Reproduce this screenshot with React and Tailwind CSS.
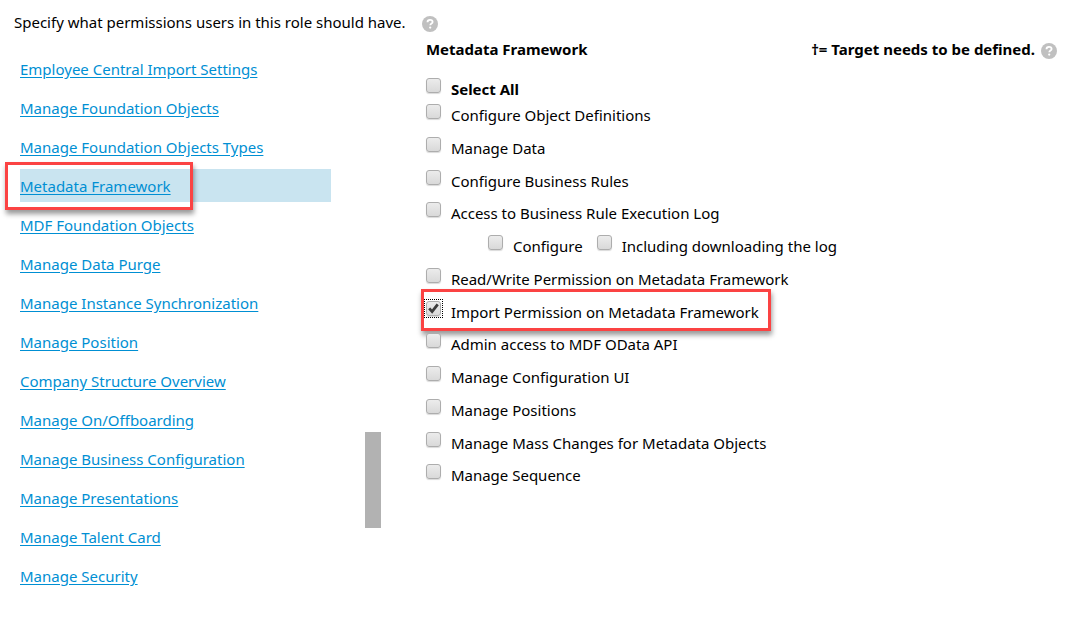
import React, { useState } from 'react';

const categories = [
  'Employee Central Import Settings',
  'Manage Foundation Objects',
  'Manage Foundation Objects Types',
  'Metadata Framework',
  'MDF Foundation Objects',
  'Manage Data Purge',
  'Manage Instance Synchronization',
  'Manage Position',
  'Company Structure Overview',
  'Manage On/Offboarding',
  'Manage Business Configuration',
  'Manage Presentations',
  'Manage Talent Card',
  'Manage Security',
];

const permissionRows = [
  ['Configure Object Definitions'],
  ['Manage Data'],
  ['Configure Business Rules'],
  ['Access to Business Rule Execution Log'],
  ['Configure', 'Including downloading the log'],
  ['Read/Write Permission on Metadata Framework'],
  ['Import Permission on Metadata Framework'],
  ['Admin access to MDF OData API'],
  ['Manage Configuration UI'],
  ['Manage Positions'],
  ['Manage Mass Changes for Metadata Objects'],
  ['Manage Sequence'],
];

const importPermission = 'Import Permission on Metadata Framework';

const HelpButton = () => (
  <button type="button" aria-label="Help" className="shrink-0">
    <svg width="16" height="16" viewBox="0 0 16 16" fill="none">
      <circle cx="8" cy="8" r="8" fill="#c0c0c0" />
      <path d="M5.5 6.3C5.5 4.7 6.5 3.9 8 3.9s2.6.8 2.6 2.1c0 1.6-2.3 1.6-2.3 3.3" stroke="#fff" strokeWidth="1.8" />
      <circle cx="8.2" cy="11.6" r="1.1" fill="#fff" />
    </svg>
  </button>
);

// red call-out frame, drawn over the item it surrounds
const Highlight = ({ className }) => (
  <span
    className={`pointer-events-none absolute border-3 border-[#fb4343] shadow-[1px_4px_5px_rgba(0,0,0,0.4)] ${className}`}
  />
);

const Permission = ({ label, checked, onChange, bold }) => (
  <label className="flex items-start gap-[10px]">
    <span
      className={`relative size-[15px] shrink-0 ${
        checked ? 'outline-1 outline-offset-1 outline-dotted outline-black' : ''
      }`}
    >
      <input
        type="checkbox"
        className="block size-[15px] appearance-none rounded-[3px] border border-[#adadad] bg-linear-to-b from-[#ececec] to-[#d9d9d9] shadow-[0_1px_1px_rgba(0,0,0,0.15)]"
        checked={checked}
        onChange={onChange}
      />
      {checked && (
        <svg className="pointer-events-none absolute inset-0" width="15" height="15" viewBox="0 0 15 15" fill="none">
          <path d="M3.2 7.4l2.9 3.2 5.6-7.2" stroke="#3c3c3c" strokeWidth="2.8" />
        </svg>
      )}
    </span>
    <span className={`pt-px leading-5 ${bold ? 'font-bold' : ''}`}>{label}</span>
  </label>
);

const App = () => {
  const [selected, setSelected] = useState([importPermission]);

  const toggle = (label) => {
    setSelected(selected.includes(label) ? selected.filter((s) => s !== label) : [...selected, label]);
  };

  const all = permissionRows.flat();
  const allSelected = all.every((label) => selected.includes(label));

  return (
    <main className="min-h-screen bg-white pt-3 pb-6 font-['Trebuchet_MS','Noto_Sans',sans-serif] text-[15px] leading-5 text-black">
      <div className="flex items-end gap-4 pl-[14px]">
        <p>Specify what permissions users in this role should have.</p>
        <HelpButton />
      </div>

      <div className="flex items-start">
        <div className="flex w-[35.5%] shrink-0 pt-5">
          <ul className="min-w-0 flex-1 space-y-[6px] pr-[34px] pl-5">
            {categories.map((name) => (
              <li
                key={name}
                className={`flex h-[33px] items-center ${name === 'Metadata Framework' ? 'bg-[#c9e4f0]' : ''}`}
              >
                <span className="relative">
                  <a href="#" className="text-[#008fd3] underline underline-offset-2">
                    {name}
                  </a>
                  {name === 'Metadata Framework' && (
                    <Highlight className="-top-[14px] -right-[22px] -bottom-[14px] -left-[15px]" />
                  )}
                </span>
              </li>
            ))}
          </ul>
          <div className="flex w-4 flex-col justify-end pb-16">
            <div className="h-24 bg-[#b2b2b2]" />
          </div>
        </div>

        <section className="min-w-0 flex-1 pt-[7px] pr-4 pl-[45px]">
          <div className="flex items-center justify-between font-bold">
            <h2>Metadata Framework</h2>
            <div className="flex items-end gap-[6px]">
              <span>†= Target needs to be defined.</span>
              <HelpButton />
            </div>
          </div>

          <div className="mt-[19px]">
            <Permission
              label="Select All"
              bold
              checked={allSelected}
              onChange={() => setSelected(allSelected ? [] : all)}
            />
          </div>

          <ul className="mt-[5px] grid min-h-[393px] auto-rows-fr">
            {permissionRows.map((row) => (
              <li key={row[0]} className={`flex items-start gap-[14px] ${row.length > 1 ? 'pl-[62px]' : ''}`}>
                {row.map((label) => (
                  <div key={label} className="relative">
                    <Permission label={label} checked={selected.includes(label)} onChange={() => toggle(label)} />
                    {label === importPermission && (
                      <Highlight className="-top-3 -right-3 -bottom-[9px] -left-[5px]" />
                    )}
                  </div>
                ))}
              </li>
            ))}
          </ul>
        </section>
      </div>
    </main>
  );
};

export default App;
